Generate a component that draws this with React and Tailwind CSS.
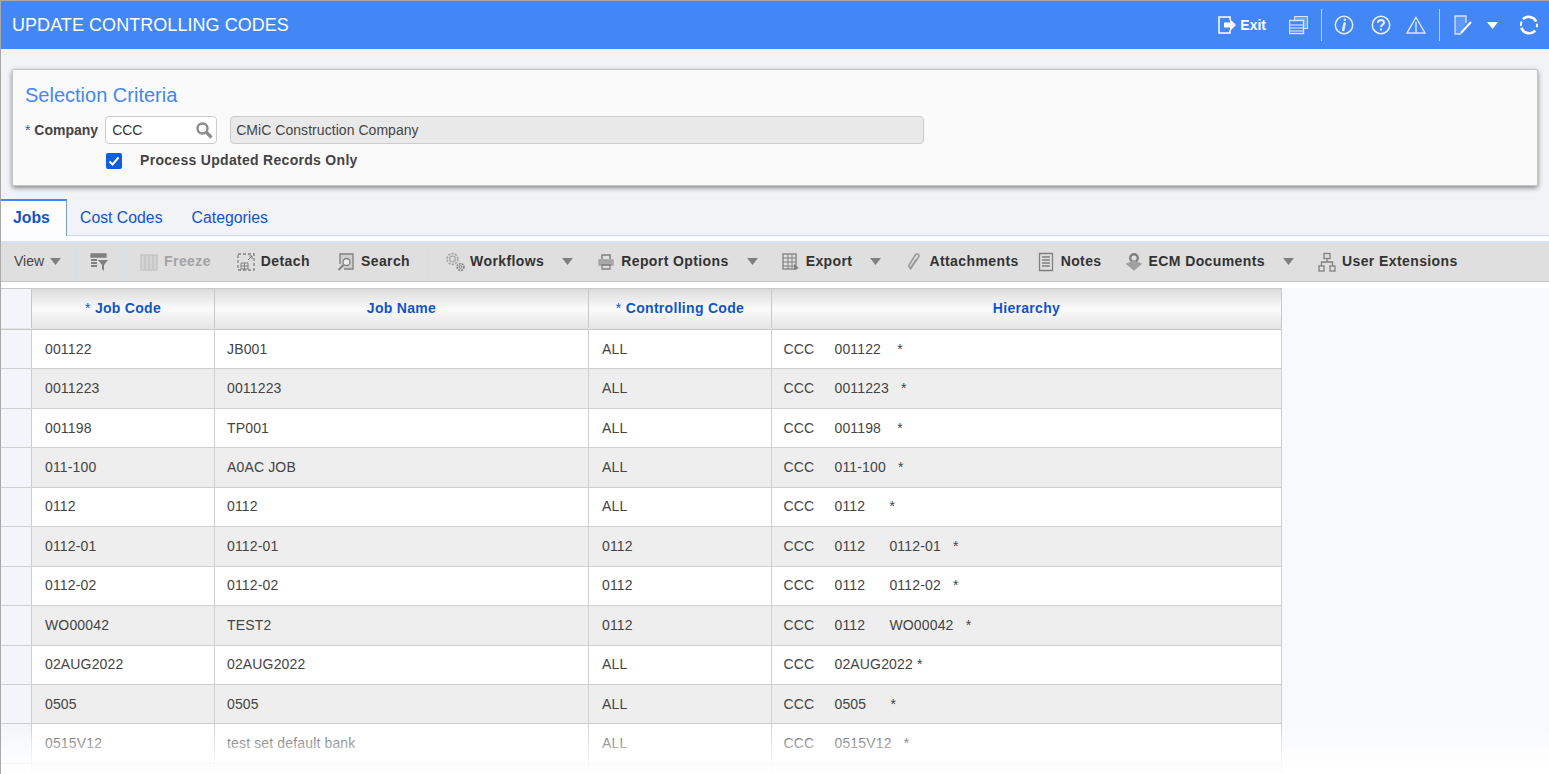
import React from 'react';

const jobs = [
    { code: '001122', name: 'JB001', ctrl: 'ALL', path: ['001122'] },
    { code: '0011223', name: '0011223', ctrl: 'ALL', path: ['0011223'] },
    { code: '001198', name: 'TP001', ctrl: 'ALL', path: ['001198'] },
    { code: '011-100', name: 'A0AC JOB', ctrl: 'ALL', path: ['011-100'] },
    { code: '0112', name: '0112', ctrl: 'ALL', path: ['0112'] },
    { code: '0112-01', name: '0112-01', ctrl: '0112', path: ['0112', '0112-01'] },
    { code: '0112-02', name: '0112-02', ctrl: '0112', path: ['0112', '0112-02'] },
    { code: 'WO00042', name: 'TEST2', ctrl: '0112', path: ['0112', 'WO00042'] },
    { code: '02AUG2022', name: '02AUG2022', ctrl: 'ALL', path: ['02AUG2022'] },
    { code: '0505', name: '0505', ctrl: 'ALL', path: ['0505'] },
    { code: '0515V12', name: 'test set default bank', ctrl: 'ALL', path: ['0515V12'] },
    { code: '', name: '', ctrl: '', path: null },
];

// codes are space padded in the hierarchy column
const hierarchyText = (path) =>
    path ? 'CCC'.padEnd(8) + path.map(p => p.padEnd(10)).join('') + '*' : '';

const Caret = ({ className = 'text-[#808080]' }) => (
    <svg width="11" height="7" viewBox="0 0 11 7" className={className}>
        <path d="M0 0h11L5.5 7z" fill="currentColor" />
    </svg>
);

const Ico = ({ children }) => (
    <svg width="20" height="20" viewBox="0 0 20 20" fill="none" stroke="#808080" strokeWidth="1.3" className="shrink-0">
        {children}
    </svg>
);

const TopBar = () => (
    <div className="flex h-[48px] shrink-0 items-center justify-between bg-[#4387f6] pl-[11px] pr-[10px] text-white">
        <span className="text-[18px] tracking-[0.05px]">UPDATE CONTROLLING CODES</span>
        <div className="flex items-center">
            <svg width="20" height="18" viewBox="0 0 20 18" fill="none" stroke="white" strokeWidth="1.5">
                <path d="M12 4V1H1v16h11v-3" />
                <path d="M6 6.5h6V3l6 6-6 6v-3.5H6z" fill="white" stroke="none" />
            </svg>
            <span className="ml-[2px] text-[14px] font-bold">Exit</span>
            <svg width="20" height="20" viewBox="0 0 20 20" fill="none" stroke="white" className="ml-[23px] opacity-80">
                <rect x="5.5" y="1.5" width="13" height="12" fill="white" fillOpacity="0.3" />
                <rect x="0.5" y="5.5" width="14" height="13" fill="#4387f6" strokeWidth="1.4" />
                <path d="M1 10h13M1 13h13M1 16h13" stroke="#cfe0fd" strokeWidth="1.6" />
            </svg>
            <div className="ml-[12px] h-[32px] w-px bg-[#b7d0fb]" />
            <svg width="20" height="20" viewBox="0 0 20 20" fill="none" stroke="white" strokeWidth="1.5" className="ml-[12px] opacity-85">
                <circle cx="10" cy="10" r="8.7" />
                <path d="M10.8 4.8h.1M10.6 8.5l-1.4 6.5" strokeWidth="2.6" strokeLinecap="round" />
            </svg>
            <svg width="20" height="20" viewBox="0 0 20 20" fill="none" stroke="white" strokeWidth="1.5" className="ml-[17px] opacity-90">
                <circle cx="10" cy="10" r="8.7" />
                <path d="M7 7.8c0-4 6.2-3.6 6-.2-.1 2-3 2.2-3 4.4M10 13.6v2" strokeWidth="2" />
            </svg>
            <svg width="20" height="18" viewBox="0 0 20 18" fill="none" stroke="white" strokeWidth="1.4" className="ml-[15px] opacity-80">
                <path d="M10 1.5L19 17H1z" />
                <path d="M10 6v11" />
            </svg>
            <div className="ml-[13px] h-[32px] w-px bg-[#b7d0fb]" />
            <svg width="20" height="20" viewBox="0 0 20 20" fill="none" stroke="white" strokeWidth="1.3" className="ml-[13px]">
                <path d="M13 8V1H2v18h6" strokeOpacity="0.75" fill="white" fillOpacity="0.15" />
                <path d="M8 18l10-11" strokeWidth="2" />
            </svg>
            <Caret className="ml-[14px] text-white" />
            <svg width="20" height="20" viewBox="0 0 20 20" fill="none" stroke="white" strokeWidth="2.6" className="ml-[21px]">
                <path d="M4 4.2A8.2 8.2 0 0 1 17.2 6.5" />
                <path d="M16.2 15.6A8.2 8.2 0 0 1 2.4 12.8" />
                <path d="M17.8 8.6a8.2 8.2 0 0 1 0 3.6" strokeWidth="2" />
                <path d="M2 11a8.2 8.2 0 0 1 .6-4.5" strokeWidth="2" />
            </svg>
        </div>
    </div>
);

const Criteria = () => (
    <div className="mx-[11px] mt-[20px] h-[117px] shrink-0 rounded-[2px] border border-[#c4c4c4] bg-[#fafafa] pl-[12px] pt-[13px] shadow-[0_2px_5px_rgba(0,0,0,0.45)]">
        <h2 className="text-[20px] leading-[24px] text-[#4387f6]">Selection Criteria</h2>
        <div className="mt-[9px] flex items-center">
            <span className="text-[14px] font-bold text-[#444]"><span className="font-normal text-[#1a56c4]">*</span> Company</span>
            <div className="ml-[7px] flex h-[28px] w-[112px] items-center justify-between rounded-[4px] border border-[#ccc] bg-white pl-[6px] pr-[3px] text-[14px] text-[#333]">
                CCC
                <svg width="18" height="18" viewBox="0 0 18 18" fill="none" stroke="#8c8c8c">
                    <circle cx="7.5" cy="7.5" r="5" strokeWidth="2.4" />
                    <path d="M11.5 11.5l5 5" strokeWidth="3.2" />
                </svg>
            </div>
            <div className="ml-[13px] flex h-[28px] w-[694px] items-center rounded-[4px] border border-[#ccc] bg-[#e9e9e9] pl-[5px] text-[14px] tracking-[0.05px] text-[#444]">CMiC Construction Company</div>
        </div>
        <div className="mt-[6px] flex items-center pl-[81px]">
            <span className="flex h-[16px] w-[16px] items-center justify-center rounded-[2px] bg-[#0b5fdc]">
                <svg width="12" height="12" viewBox="0 0 12 12" fill="none" stroke="white" strokeWidth="2"><path d="M1.5 6.5l3 3 6-7" /></svg>
            </span>
            <span className="ml-[18px] text-[14px] font-bold tracking-[0.3px] text-[#444]">Process Updated Records Only</span>
        </div>
    </div>
);

const Tabs = () => (
    <div className="mt-[13px] flex h-[37px] shrink-0 border-b border-[#cfdbe6] text-[15.8px] text-[#0f55c8]">
        <div className="flex h-[37px] w-[66px] items-center border-r border-t-[2px] border-r-[#7a9cc6] border-t-[#4387f6] bg-[#fdfdfd] pb-[2px] pl-[12px] font-bold">Jobs</div>
        <div className="flex items-center pl-[13px] pt-[2px]">Cost Codes</div>
        <div className="flex items-center pl-[29px] pt-[2px]">Categories</div>
    </div>
);

const Sep = ({ className }) => <div className={`h-[34px] w-px bg-[#d5dfe8] ${className}`} />;

const Tool = ({ icon, label, className, caret, muted }) => (
    <div className={`flex items-center ${className}`}>
        {icon}
        <span className={`ml-[5px] whitespace-nowrap text-[14px] font-bold tracking-[0.4px] ${muted ? 'text-[#a3a3a3]' : 'text-[#333]'}`}>{label}</span>
        {caret && <span className="ml-[18px]"><Caret /></span>}
    </div>
);

const Toolbar = () => (
    <div className="shrink-0 bg-[#fcfdfe] pt-[5px]">
        <div className="flex h-[41px] items-center border-b border-t-2 border-b-[#c4c4c4] border-t-[#d5e4f5] bg-[#dfdfdf] pb-[1px] pl-[13px]">
            <span className="text-[14px] text-[#444]">View</span>
            <span className="ml-[6px]"><Caret /></span>
            <Sep className="ml-[15px]" />
            <span className="ml-[12px]">
                <Ico><path d="M2 2h15v3H2z" fill="#808080" /><path d="M2 8h6M2 11h6M2 14h6" strokeWidth="2" /><path d="M9 8h10l-4 5v6l-2-2v-4z" fill="#808080" stroke="none" /></Ico>
            </span>
            <Sep className="ml-[13px]" />
            <Tool className="ml-[16px]" muted label="Freeze" icon={<Ico><g opacity="0.3"><rect x="2" y="3" width="16" height="15" fill="#bbb" /><path d="M6 3v15M10 3v15M14 3v15" /></g></Ico>} />
            <Tool className="ml-[25px]" label="Detach" icon={<Ico><rect x="2" y="2" width="16" height="16" strokeDasharray="3 2" /><path d="M5 11h7v6H5zM5 14h7M8.5 11v6M12 8l4-4M13 4h3v3" strokeWidth="1" /></Ico>} />
            <Sep className="ml-[7px]" />
            <Tool className="ml-[18px]" label="Search" icon={<Ico><path d="M4 12V2h13v15H8" fill="#d0d0d0" /><circle cx="10.5" cy="10" r="3.5" fill="#eee" /><path d="M7.5 13l-5 5" strokeWidth="2" /></Ico>} />
            <Sep className="ml-[17px]" />
            <Tool className="ml-[17px]" label="Workflows" caret icon={
                <Ico>
                    <circle cx="7.5" cy="7" r="5.4" stroke="#a8a8a8" strokeWidth="1.8" strokeDasharray="2.2 1.2" />
                    <circle cx="7.5" cy="7" r="2.8" stroke="#a8a8a8" strokeWidth="1.3" />
                    <circle cx="15.5" cy="15" r="3.4" strokeWidth="1.6" strokeDasharray="1.8 1" />
                    <circle cx="15.5" cy="15" r="1.4" strokeWidth="1" />
                </Ico>
            } />
            <Tool className="ml-[23px]" label="Report Options" caret icon={<Ico><path d="M6 7V3h8v4" strokeWidth="1.5" /><path d="M3 8h14v5H3z" fill="#a8a8a8" stroke="#a0a0a0" /><path d="M6 13h8v4H6z" strokeWidth="1.3" /></Ico>} />
            <Tool className="ml-[23px]" label="Export" caret icon={<Ico><rect x="2" y="2" width="13" height="15" /><path d="M2 6h13M2 10h13M2 14h13M7 2v15M11 2v15" strokeWidth="1" /><path d="M13 12l5 4-5 2z" fill="#808080" stroke="none" /></Ico>} />
            <Tool className="ml-[23px]" label="Attachments" icon={<Ico><path d="M6 17.5L14.5 5c1.7-3-2-4-3.2-2L5.2 13c-1 2 1 3 2 2l5-7.5" stroke="#9a9a9a" strokeWidth="1.6" /></Ico>} />
            <Tool className="ml-[17px]" label="Notes" icon={<Ico><path d="M3.5 1.5h13v17h-13z" /><path d="M6 5h8M6 8h8M6 11h8M6 14h8" /></Ico>} />
            <Tool className="ml-[22px]" label="ECM Documents" caret icon={<Ico><circle cx="10" cy="6" r="3.8" strokeWidth="2.4" /><path d="M3 12l7 6 7-6-7-3z" fill="#a0a0a0" stroke="#a0a0a0" /></Ico>} />
            <Tool className="ml-[23px]" label="User Extensions" icon={<Ico><rect x="7" y="1.5" width="6" height="5" /><rect x="2" y="14" width="5" height="5" /><rect x="13" y="14" width="5" height="5" /><path d="M10 6.5V10M4.5 14v-4h11v4" /></Ico>} />
        </div>
    </div>
);

const Grid = () => (
    <div className="flex-1 overflow-hidden bg-[#f8f9fc]">
        <div className="h-[6px] bg-white" />
        <div className="w-[1281px]">
            <div className="grid h-[42px] grid-cols-[30px_183px_374px_183px_511px] border-y border-[#c8c8c8] bg-gradient-to-b from-[#dcdcdc] via-[#fbfbfb] to-[#e4e4e4] pb-[1px] text-[14px] font-bold tracking-[0.3px] text-[#0f55c8]">
                <div className="bg-[#f3f5fa]" />
                <div className="flex items-center justify-center border-l border-[#c8c8c8]"><span className="font-normal">*&nbsp;</span>Job Code</div>
                <div className="flex items-center justify-center border-l border-[#c8c8c8]">Job Name</div>
                <div className="flex items-center justify-center border-l border-[#c8c8c8]"><span className="font-normal">*&nbsp;</span>Controlling Code</div>
                <div className="flex items-center justify-center border-x border-[#c8c8c8]">Hierarchy</div>
            </div>
            {jobs.map((job, i) => (
                <div key={i} className={`grid h-[39.45px] grid-cols-[30px_183px_374px_183px_511px] border-b border-[#cfcfcf] text-[14px] tracking-[0.15px] text-[#444] ${i % 2 ? 'bg-[#eeeeee]' : 'bg-white'}`}>
                    <div className="bg-[#f3f5fa]" />
                    <div className="flex items-center border-l border-[#cfcfcf] pl-[13px]">{job.code}</div>
                    <div className="flex items-center border-l border-[#cfcfcf] pl-[12px]">{job.name}</div>
                    <div className="flex items-center border-l border-[#cfcfcf] pl-[13px]">{job.ctrl}</div>
                    <div className="flex items-center whitespace-pre border-x border-[#cfcfcf] pl-[11.5px]">{hierarchyText(job.path)}</div>
                </div>
            ))}
        </div>
    </div>
);

export default function App() {
    return (
        <div className="relative flex h-[774px] w-full flex-col overflow-hidden border-l border-t border-[#a8a8a8] bg-[#f1f3f6] font-['Liberation_Sans',Arial,sans-serif]">
            <TopBar />
            <Criteria />
            <Tabs />
            <Toolbar />
            <Grid />
            {/* bottom fade over the last rows */}
            <div className="pointer-events-none absolute inset-x-0 bottom-0 h-[50px] bg-gradient-to-b from-white/0 via-white/60 to-white" />
        </div>
    );
}
